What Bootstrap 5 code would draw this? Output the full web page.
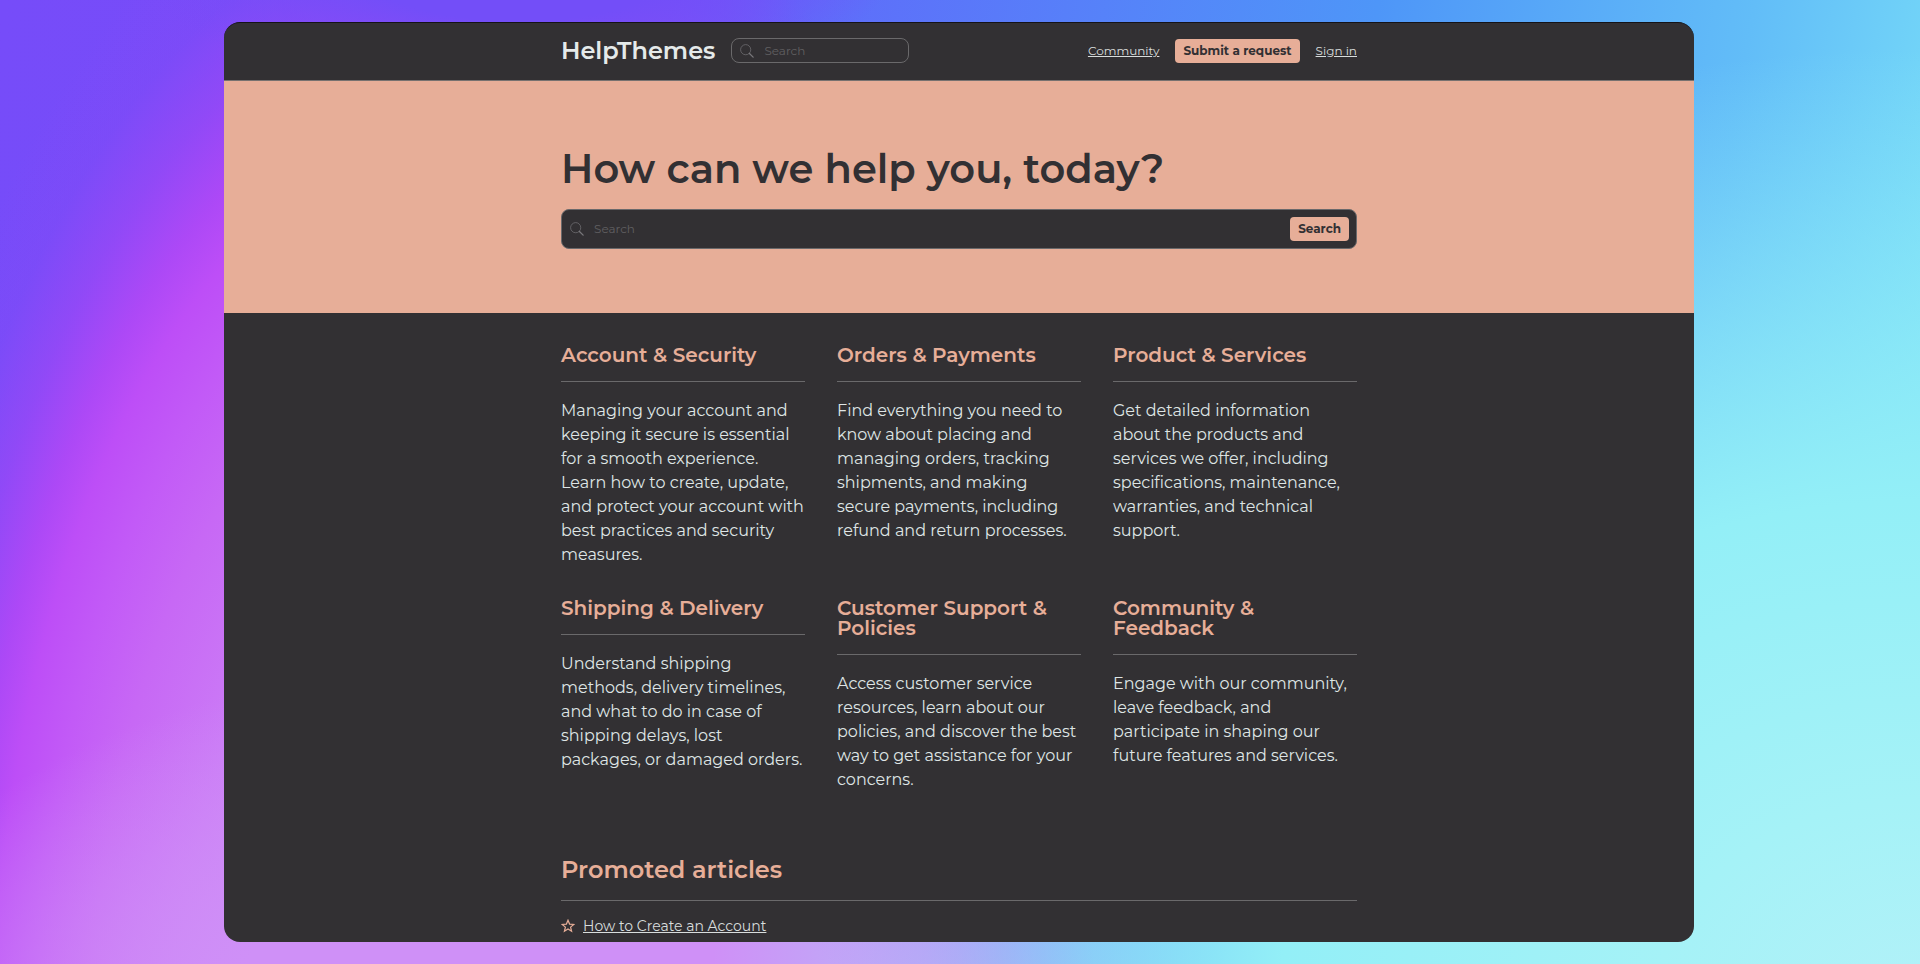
<!DOCTYPE html>
<html lang="en">
<head>
<meta charset="utf-8">
<meta name="viewport" content="width=device-width, initial-scale=1">
<title>HelpThemes</title>
<link rel="stylesheet" href="https://cdn.jsdelivr.net/npm/bootstrap@5.3.0/dist/css/bootstrap.min.css">
<style>
:root{--ink:#323033;--peach:#e7ae98;--rule:#6a696b;--text:#dfe5e5;--muted:#605f61}
body{
  font-family:Montserrat,Inter,"Open Sans",sans-serif;color:var(--text);
  min-height:100vh;padding:22px 2px 22px 0;
  background:
    radial-gradient(ellipse 63% 100% at 100% 105%,#b2f1f8 0,#a5f2f7 22%,#93eff7 53%,rgba(147,239,247,0) 100%),
    radial-gradient(ellipse 36% 38% at 28% 106%,#cf90f7 0,#cf90f7 45%,rgba(207,144,247,0) 100%),
    radial-gradient(ellipse 20% 16% at 27% -5%,#734ef8 0,#734ef8 45%,rgba(115,78,248,0) 100%),
    radial-gradient(ellipse 28% 110% at 24% 110%,#cf90f7 0,#cf90f7 30%,#cb7af6 53%,#c768f5 69%,#c25af7 79%,#bd4ef7 87%,rgba(178,72,246,.9) 93%,rgba(155,72,246,.7) 101%,rgba(132,74,247,.4) 109%,rgba(122,75,248,0) 118%),
    linear-gradient(100deg,#764cf9 0,#794bf8 26%,#5f6bfa 38%,#4e96f8 66%,#62bdf8 84%,#76daf8 95%);
}
.shell{width:76.6%;height:calc(100vh - 44px);background:var(--ink);border-radius:16px;border-top:1px solid #151318}
.inner{width:100%;max-width:796px;margin:0 auto}
.topbar{height:58px;padding-bottom:2px;border-bottom:1px solid #77716f}
.brand{font-size:24px;line-height:32px;font-weight:600;color:#e5eaea}
.finder{gap:10px;padding:0 7px 0 8px;border:1px solid var(--rule);border-radius:8px;color:#77767a;font-size:12px;line-height:16px}
.finder input{background:none;border:0;outline:0;color:var(--text);min-width:0;padding:0}
.finder input::placeholder{color:var(--muted);opacity:1}
.find-compact{width:178px;height:25px}
.lnk{color:#d8dddd}
.lnk:hover{color:#fff}
.toplinks{font-size:12px;line-height:16px}
.cta{background:var(--peach);color:var(--ink);font-size:12px;line-height:16px;font-weight:700;border-radius:4px;padding:4px 8px}
.hero{background:var(--peach);padding:64px 0}
.hero h1{font-size:40px;line-height:48px;font-weight:600;color:var(--ink)}
.find-wide{background:var(--ink);height:40px}
.topics{display:grid;grid-template-columns:repeat(3,1fr);gap:31px 32px;padding-top:32px}
h2{color:var(--peach);font-weight:600;border-bottom:1px solid var(--rule);padding-bottom:16px}
.topics h2{font-size:20px;line-height:20px;margin-bottom:17px}
.topics p{font-size:16px;line-height:24px}
.promo{margin-top:63px}
.promo h2{font-size:24px;line-height:29px;margin-bottom:13px}
.promo li{font-size:14px;line-height:24px}
@media (max-width:1100px){.shell{width:100%}.inner{padding:0 16px}.topics{grid-template-columns:1fr}}
</style>
</head>
<body>
<svg class="d-none" aria-hidden="true">
  <symbol id="lens" viewBox="0 0 16 16"><circle cx="6.5" cy="6.5" r="5.8" fill="none" stroke="currentColor" stroke-width=".8"/><path d="M10.8 10.8 15 15" fill="none" stroke="currentColor" stroke-width="1.5" stroke-linecap="round"/></symbol>
  <symbol id="star" viewBox="0 0 14 14"><path d="M7 1.2 8.6 5.1 12.8 5.4 9.6 8.1 10.6 12.3 7 10 3.4 12.3 4.4 8.1 1.2 5.4 5.4 5.1Z" fill="none" stroke="currentColor" stroke-width="1.2" stroke-linejoin="miter"/></symbol>
</svg>
<div class="shell mx-auto overflow-hidden">
  <header class="topbar">
    <div class="inner h-100 d-flex align-items-center gap-3">
      <a class="brand text-decoration-none" href="#">HelpThemes</a>
      <form class="finder find-compact d-flex align-items-center" role="search">
        <svg width="14" height="14" class="flex-shrink-0"><use href="#lens"/></svg>
        <input class="flex-fill" type="search" placeholder="Search" aria-label="Search">
      </form>
      <nav class="toplinks ms-auto d-flex align-items-center gap-3">
        <a class="lnk" href="#">Community</a>
        <a class="cta text-decoration-none" href="#">Submit a request</a>
        <a class="lnk" href="#">Sign in</a>
      </nav>
    </div>
  </header>
  <section class="hero">
    <div class="inner">
      <h1 class="mb-3">How can we help you, today?</h1>
      <form class="finder find-wide d-flex align-items-center" role="search">
        <svg width="14" height="14" class="flex-shrink-0"><use href="#lens"/></svg>
        <input class="flex-fill" type="search" placeholder="Search" aria-label="Search help articles">
        <button class="cta border-0" type="submit">Search</button>
      </form>
    </div>
  </section>
  <main class="inner">
    <div class="topics">
      <section><h2>Account &amp; Security</h2><p class="mb-0">Managing your account and keeping it secure is essential for a smooth experience. Learn how to create, update, and protect your account with best practices and security measures.</p></section>
      <section><h2>Orders &amp; Payments</h2><p class="mb-0">Find everything you need to know about placing and managing orders, tracking shipments, and making secure payments, including refund and return processes.</p></section>
      <section><h2>Product &amp; Services</h2><p class="mb-0">Get detailed information about the products and services we offer, including specifications, maintenance, warranties, and technical support.</p></section>
      <section><h2>Shipping &amp; Delivery</h2><p class="mb-0">Understand shipping methods, delivery timelines, and what to do in case of shipping delays, lost packages, or damaged orders.</p></section>
      <section><h2>Customer Support &amp; Policies</h2><p class="mb-0">Access customer service resources, learn about our policies, and discover the best way to get assistance for your concerns.</p></section>
      <section><h2>Community &amp; Feedback</h2><p class="mb-0">Engage with our community, leave feedback, and participate in shaping our future features and services.</p></section>
    </div>
    <section class="promo">
      <h2>Promoted articles</h2>
      <ul class="list-unstyled mb-0">
        <li class="d-flex align-items-center gap-2"><svg width="14" height="14" color="#e7ae98"><use href="#star"/></svg><a class="lnk" href="#">How to Create an Account</a></li>
      </ul>
    </section>
  </main>
</div>
<script src="https://cdn.jsdelivr.net/npm/bootstrap@5.3.0/dist/js/bootstrap.bundle.min.js"></script>
</body>
</html>
